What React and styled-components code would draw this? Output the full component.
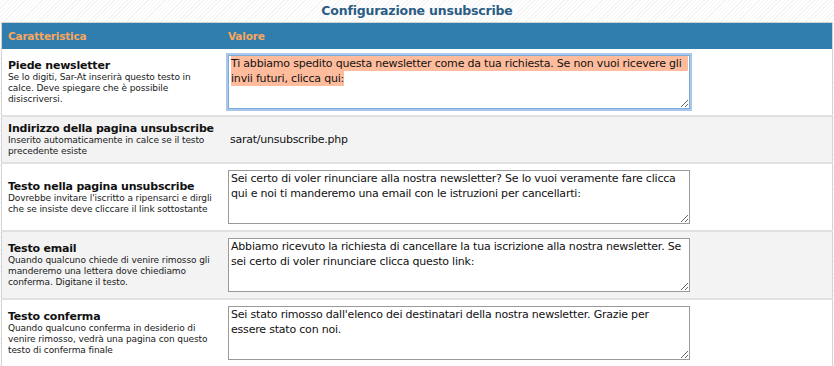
import { useEffect, useRef } from "react";
import styled, { createGlobalStyle } from "styled-components";

const GlobalStyle = createGlobalStyle`
  html, body {
    margin: 0;
    padding: 0;
  }
  body {
    width: 834px;
    height: 366px;
    overflow: hidden;
    font-family: "DejaVu Sans", Verdana, sans-serif;
    color: #111;
    background: repeating-linear-gradient(
      -45deg,
      #ffffff 0px,
      #ffffff 2px,
      #f4f4f4 2px,
      #f4f4f4 3px
    );
  }
`;

const Page = styled.div`
  padding: 0 1px;
`;

const Title = styled.h2`
  margin: 0;
  height: 22px;
  line-height: 22px;
  text-align: center;
  font-size: 12.5px;
  letter-spacing: -0.2px;
  font-weight: bold;
  color: #2b5d84;
`;

const Table = styled.table`
  width: 832px;
  table-layout: fixed;
  border-collapse: collapse;
  border: 1px solid #d4d4d4;
  background: #fff;
`;

const HeadCell = styled.th`
  background: #2f7eae;
  color: #f9a65c;
  font-size: 10.5px;
  letter-spacing: -0.2px;
  font-weight: bold;
  text-align: left;
  height: 26px;
  padding: 0 6px;
  width: ${(p) => (p.$first ? "208px" : "auto")};
`;

const Row = styled.tr`
  background: ${(p) => (p.$alt ? "#f3f3f3" : "#ffffff")};
  border-bottom: 2px solid #e1e1e1;
  &:last-child {
    border-bottom: none;
  }
`;

const LabelCell = styled.td`
  padding: 5px 4px 5px 6px;
  vertical-align: middle;
`;

const ValueCell = styled.td`
  padding: 6px;
  vertical-align: middle;
  font-size: 11px;
  letter-spacing: -0.25px;
`;

const Name = styled.div`
  font-size: 11px;
  letter-spacing: -0.2px;
  font-weight: bold;
  line-height: 13px;
  color: #111;
`;

const Desc = styled.div`
  font-size: 9px;
  letter-spacing: -0.1px;
  line-height: 11px;
  color: #1a1a1a;
`;

const Plain = styled.span`
  display: block;
  padding-left: 2px;
`;

const Area = styled.textarea`
  display: block;
  box-sizing: border-box;
  width: 462px;
  height: 54px;
  margin: 0;
  padding: 0 4px 0 2px;
  font-family: "DejaVu Sans", Verdana, sans-serif;
  font-size: 11px;
  letter-spacing: -0.2px;
  line-height: 15px;
  color: #111;
  background: #fff;
  border: 1px solid #9a9a9a;
  border-radius: 0;
  outline: none;
  resize: both;

  &:focus {
    border: 1px solid #7fa9d8;
    box-shadow: 0 0 0 2px #a9c8ec;
  }

  &::selection {
    background: #ffbc9c;
    color: #111;
  }
`;

const rows = [
  {
    name: "Piede newsletter",
    desc: "Se lo digiti, Sar-At inserirà questo testo in calce. Deve spiegare che è possibile disiscriversi.",
    value:
      "Ti abbiamo spedito questa newsletter come da tua richiesta. Se non vuoi ricevere gli invii futuri, clicca qui:",
    focus: true,
  },
  {
    name: "Indirizzo della pagina unsubscribe",
    desc: "Inserito automaticamente in calce se il testo precedente esiste",
    plain: "sarat/unsubscribe.php",
  },
  {
    name: "Testo nella pagina unsubscribe",
    desc: "Dovrebbe invitare l'iscritto a ripensarci e dirgli che se insiste deve cliccare il link sottostante",
    value:
      "Sei certo di voler rinunciare alla nostra newsletter? Se lo vuoi veramente fare clicca qui e noi ti manderemo una email con le istruzioni per cancellarti:",
  },
  {
    name: "Testo email",
    desc: "Quando qualcuno chiede di venire rimosso gli manderemo una lettera dove chiediamo conferma. Digitane il testo.",
    value:
      "Abbiamo ricevuto la richiesta di cancellare la tua iscrizione alla nostra newsletter. Se sei certo di voler rinunciare clicca questo link:",
  },
  {
    name: "Testo conferma",
    desc: "Quando qualcuno conferma in desiderio di venire rimosso, vedrà una pagina con questo testo di conferma finale",
    value:
      "Sei stato rimosso dall'elenco dei destinatari della nostra newsletter. Grazie per essere stato con noi.",
  },
];

const FocusedArea = ({ defaultValue }) => {
  const ref = useRef(null);
  useEffect(() => {
    if (ref.current) {
      ref.current.focus();
      ref.current.select();
    }
  }, []);
  return <Area ref={ref} defaultValue={defaultValue} />;
};

const App = () => {
  return (
    <Page>
      <GlobalStyle />
      <Title>Configurazione unsubscribe</Title>
      <Table>
        <thead>
          <tr>
            <HeadCell $first>Caratteristica</HeadCell>
            <HeadCell>Valore</HeadCell>
          </tr>
        </thead>
        <tbody>
          {rows.map((row, i) => (
            <Row key={row.name} $alt={i % 2 === 1}>
              <LabelCell>
                <Name>{row.name}</Name>
                <Desc>{row.desc}</Desc>
              </LabelCell>
              <ValueCell>
                {row.plain ? (
                  <Plain>{row.plain}</Plain>
                ) : row.focus ? (
                  <FocusedArea defaultValue={row.value} />
                ) : (
                  <Area defaultValue={row.value} />
                )}
              </ValueCell>
            </Row>
          ))}
        </tbody>
      </Table>
    </Page>
  );
};

export default App;
